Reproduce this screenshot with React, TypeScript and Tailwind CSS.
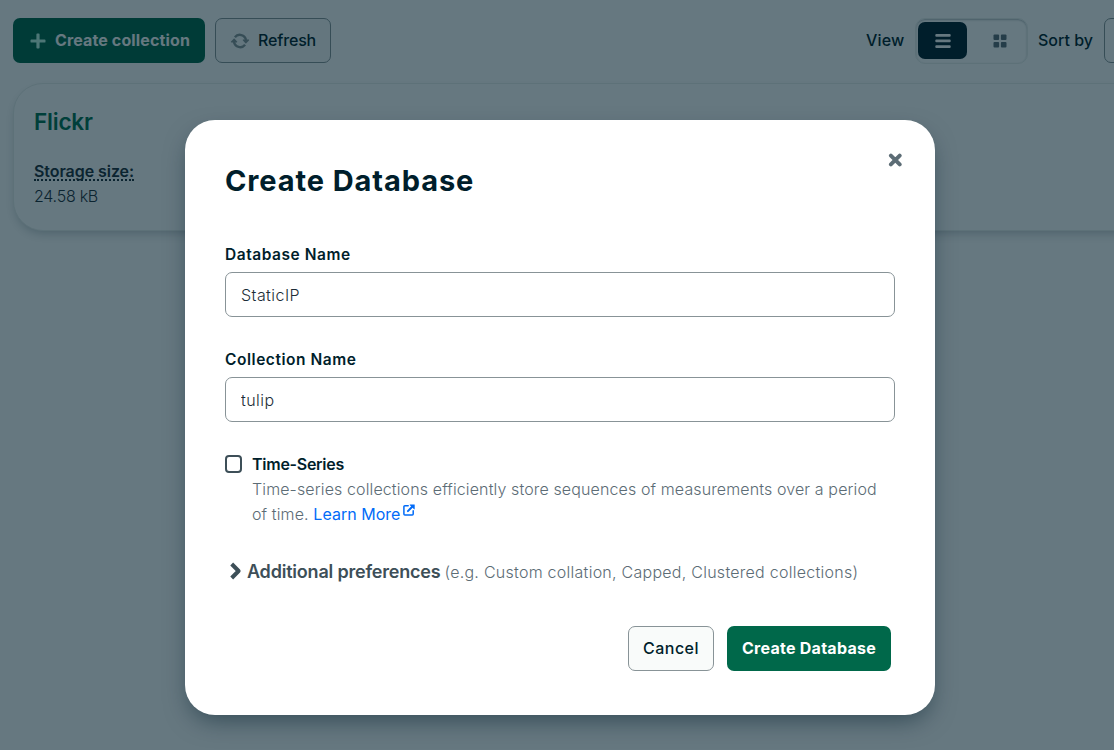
import type { ReactNode } from "react";

function PlusIcon() {
  return (
    <svg width="16" height="16" viewBox="0 0 16 16" fill="#C0FAE6">
      <path d="M6.4 1.4a.9.9 0 0 1 .9-.9h1.4a.9.9 0 0 1 .9.9v5h5a.9.9 0 0 1 .9.9v1.4a.9.9 0 0 1-.9.9h-5v5a.9.9 0 0 1-.9.9H7.3a.9.9 0 0 1-.9-.9v-5h-5a.9.9 0 0 1-.9-.9V7.3a.9.9 0 0 1 .9-.9h5z" />
    </svg>
  );
}

function RefreshIcon() {
  return (
    <svg width="20" height="18" viewBox="0 0 20 18" fill="none" className="shrink-0">
      <path d="M4.9 5.2A6.3 6.3 0 0 1 16 8" stroke="#889397" strokeWidth="2.4" />
      <path d="M15.1 12.8A6.3 6.3 0 0 1 4 10" stroke="#889397" strokeWidth="2.4" />
      <path d="M13.3 7.6h5.3c.5 0 .7.4.4.8l-2.7 2.9c-.3.3-.6.3-.9 0l-2.5-2.9c-.3-.4-.1-.8.4-.8z" fill="#889397" />
      <path d="M6.7 10.4H1.4c-.5 0-.7-.4-.4-.8l2.7-2.9c.3-.3.6-.3.9 0l2.5 2.9c.3.4.1.8-.4.8z" fill="#889397" />
    </svg>
  );
}

function MenuIcon() {
  return (
    <svg width="16" height="14" viewBox="0 0 16 14" fill="#ffffff">
      <rect x="0.3" y="0" width="15.4" height="2.7" rx="1" />
      <rect x="0.3" y="5.6" width="15.4" height="2.7" rx="1" />
      <rect x="0.3" y="11.2" width="15.4" height="2.7" rx="1" />
    </svg>
  );
}

function AppsIcon() {
  return (
    <svg width="14" height="14" viewBox="0 0 14 14" fill="#5C6C75">
      <rect x="0.5" y="0.5" width="5.6" height="5.6" rx="1" />
      <rect x="7.9" y="0.5" width="5.6" height="5.6" rx="1" />
      <rect x="0.5" y="7.9" width="5.6" height="5.6" rx="1" />
      <rect x="7.9" y="7.9" width="5.6" height="5.6" rx="1" />
    </svg>
  );
}

function CloseIcon() {
  return (
    <svg width="14" height="14" viewBox="0 0 14 14" fill="none">
      <path d="M2.9 2.6l8.8 8.8M11.7 2.6l-8.8 8.8" stroke="#5C6C75" strokeWidth="3.9" strokeLinecap="round" />
    </svg>
  );
}

function ChevronIcon() {
  return (
    <svg width="13" height="18" viewBox="0 0 13 18" fill="none">
      <path d="M1.7 2l6.9 7-6.9 7" stroke="#3D4F58" strokeWidth="4" strokeLinejoin="round" />
    </svg>
  );
}

function NewTabIcon() {
  return (
    <svg width="12" height="12" viewBox="0 0 12 12" fill="none" className="-mt-[12px] ml-[3px] inline-block align-middle">
      <path d="M5.2 1.8H1.9a1 1 0 0 0-1 1v7.3a1 1 0 0 0 1 1h7.3a1 1 0 0 0 1-1V6.8" stroke="#016BF8" strokeWidth="1.5" strokeLinecap="round" />
      <path d="M4.9 7.1l4.3-4.3" stroke="#016BF8" strokeWidth="2" strokeLinecap="round" />
      <path d="M7 .4h4.3c.3 0 .4.2.4.4v4.2c0 .4-.4.5-.6.3L6.7 1c-.2-.2-.1-.6.3-.6z" fill="#016BF8" />
    </svg>
  );
}

function Toolbar() {
  return (
    <div className="flex h-[45px] w-[1250px] items-center">
      <button className="flex h-[45px] w-[192px] shrink-0 items-center rounded-[7px] bg-[#00684A] pl-[17px] text-base font-bold tracking-[0.13px] text-white">
        <PlusIcon />
        <span className="-mt-[1px] ml-[9px] whitespace-nowrap">Create collection</span>
      </button>
      <button className="ml-[10px] flex h-[45px] w-[116px] shrink-0 items-center rounded-[7px] border border-[#889397] bg-[#F9FBFA] pl-[14px] text-base font-medium tracking-[-0.15px]">
        <RefreshIcon />
        <span className="-mt-[1px] ml-[8px]">Refresh</span>
      </button>
      <span className="-mt-[1px] ml-[535px] w-[49px] shrink-0 text-base font-medium tracking-[0.17px]">View</span>
      <div className="flex h-[46px] w-[113px] shrink-0 items-center rounded-[10px] border border-[#E8EDEB] pl-[2px] shadow-[inset_0_1px_2px_rgba(0,30,43,0.3)]">
        <button className="flex h-[37px] w-[49px] items-center justify-center rounded-[7px] bg-[#001E2B]">
          <MenuIcon />
        </button>
        <button className="ml-[8px] flex h-[37px] w-[49px] items-center justify-center">
          <AppsIcon />
        </button>
      </div>
      <span className="-mt-[1px] ml-[10px] w-[66px] shrink-0 text-base font-medium">Sort by</span>
      <div className="h-[45px] w-[120px] shrink-0 rounded-[7px] border border-[#889397] bg-white" />
    </div>
  );
}

function CollectionCard() {
  return (
    <div className="mt-[20px] h-[148px] w-[1200px] rounded-[30px] border border-[#E8EDEB] bg-white px-[20px] pt-[22px] shadow-[0_5px_12px_-4px_rgba(0,30,43,0.3)]">
      <div className="text-[22.5px] leading-[31px] font-semibold tracking-[-0.2px] text-[#007250]">Flickr</div>
      <div className="mt-[22px] h-[25px] text-base leading-[25px]">
        <span className="inline-block h-[22px] border-b-2 border-dotted border-[#1C2D38] font-semibold tracking-[-0.06px] text-[#1C2D38]">
          Storage size:
        </span>
      </div>
      <div className="text-base leading-[25px] font-light tracking-[-0.25px] text-[#1C2D38]">24.58 kB</div>
    </div>
  );
}

function Field({ label, value }: { label: string; value: string }) {
  return (
    <label className="mb-[30px] block">
      <span className="block text-[15.5px] leading-[25px] font-semibold tracking-[0.54px]">{label}</span>
      <input
        defaultValue={value}
        className="mt-[5px] block h-[45px] w-full rounded-[7px] border border-[#889397] bg-white px-[15px] text-base font-light tracking-[0.45px] text-[#1C2D38] outline-none"
      />
    </label>
  );
}

function Overlay({ children }: { children: ReactNode }) {
  return (
    <div className="absolute inset-0 flex items-start bg-[#001E2B]/60 pt-[120px] pl-[185px]">{children}</div>
  );
}

function CreateDatabaseModal() {
  return (
    <div className="relative h-[595px] w-[750px] rounded-[30px] bg-white px-[40px] pt-[41px] shadow-[0_10px_25px_-5px_rgba(0,30,43,0.5)]">
      <button className="absolute top-[33px] right-[33px]" aria-label="Close">
        <CloseIcon />
      </button>
      <h1 className="mb-[41px] text-[29px] leading-[40px] font-bold tracking-[0.9px]">Create Database</h1>
      <Field label="Database Name" value="StaticIP" />
      <Field label="Collection Name" value="tulip" />
      <div className="flex">
        <span className="mt-[3px] h-[18px] w-[17px] shrink-0 rounded-[4px] border-2 border-[#3D4F58]" />
        <div className="ml-[10px] text-base leading-[25px]">
          <div className="font-semibold tracking-[-0.26px]">Time-Series</div>
          <div className="font-light tracking-[0.12px] whitespace-nowrap text-[#5C6C75]">
            Time-series collections efficiently store sequences of measurements over a period
            <br />
            of time.{" "}
            <a className="font-normal tracking-[0.02px] text-[#016BF8]">
              Learn More
              <NewTabIcon />
            </a>
          </div>
        </div>
      </div>
      <div className="mt-[32px] flex h-[26px] items-center whitespace-nowrap">
        <span className="-mt-[2px] ml-[5px] w-[17px]">
          <ChevronIcon />
        </span>
        <span className="-mt-[1px] text-[18px] font-semibold tracking-[-0.2px] text-[#3D4F58]">Additional preferences</span>
        <span className="ml-[4px] text-base font-light tracking-[0.26px] text-[#5C6C75]">
          (e.g. Custom collation, Capped, Clustered collections)
        </span>
      </div>
      <div className="mt-[41px] mr-[4px] flex justify-end gap-[13px]">
        <button className="h-[45px] w-[86px] rounded-[7px] border border-[#889397] bg-[#F9FBFA] pb-[1px] text-base font-medium tracking-[0.45px]">
          Cancel
        </button>
        <button className="h-[45px] w-[164px] rounded-[7px] bg-[#00684A] pb-[2px] text-base font-bold tracking-[0.26px] text-white">
          Create Database
        </button>
      </div>
    </div>
  );
}

export default function App() {
  return (
    <div className="relative h-[750px] w-full overflow-hidden bg-white font-['Inter',sans-serif] text-[#001E2B]">
      <div className="pt-[18px] pl-[13px]">
        <Toolbar />
        <CollectionCard />
      </div>
      <Overlay>
        <CreateDatabaseModal />
      </Overlay>
    </div>
  );
}
